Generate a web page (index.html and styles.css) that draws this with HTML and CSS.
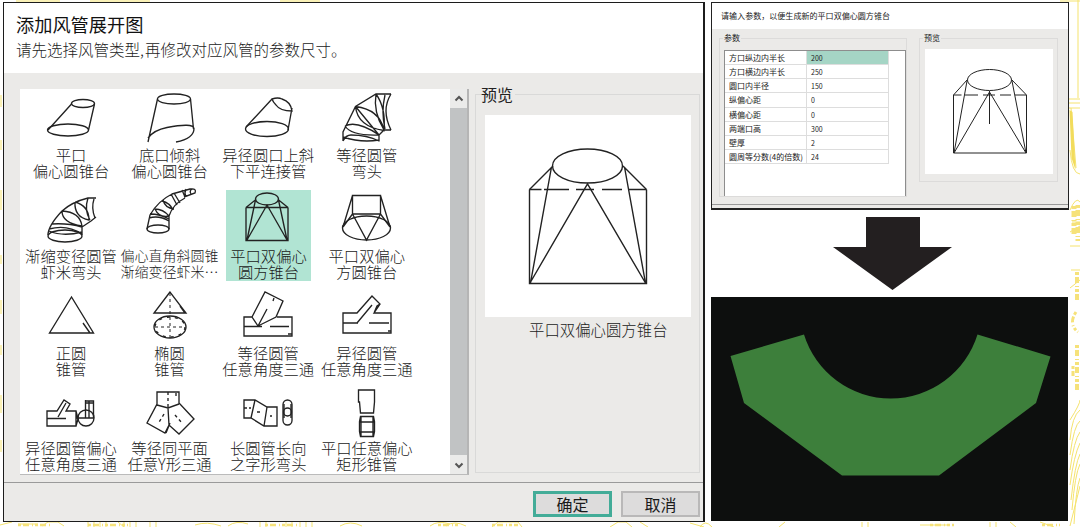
FILE: index.html
```html
<!DOCTYPE html>
<html lang="zh-CN">
<head>
<meta charset="utf-8">
<title>添加风管展开图</title>
<link rel="stylesheet" href="styles.css">
</head>
<body>
<svg class="backdrop" viewBox="0 0 1080 527" aria-hidden="true">
  <g fill="none" stroke="#f5e36e" stroke-width="1">
    <path d="M16 1h44M90 1h60M280 1h40M1060 1h20"/>
    <path d="M1 95v12M1 140v10M1 190v20M1 255v9M1 300v14M1 345v10M1 395v18M1 440v12"/>
    <path d="M1078 0v98M1069 99h11M1069 103h11M1069 108h11M1071 108l5 60M1070 150q2 24 10 24M1070 210q6-14 10-8M1072 222h8M1070 232l10-6M1070 246h10M1071 270h9M1070 288l10-8"/>
    <path d="M1070 420q10-16 10-20M1070 440q2-24 10-30M1070 455q4-30 10-34M1070 470q4-30 10-38M1070 485q4-30 10-42M1071 500q4-36 9-46M1072 510q3-36 8-46M1074 524q2-36 6-46M1070 526l10-40"/>
    <path d="M0 525l12-3M18 524h20M42 526l6-4h10l6 4M88 522v5M94 522v5M100 522v5M106 522v5M118 522l6 5M124 522v5M130 522v5M136 522v5M150 522v5M156 522v5M195 525q12-4 26 1M228 526q8-6 20-2M260 522v5M266 522v5M286 522v5M292 522v5M300 522v5M306 522v5M312 522v5M340 526q10-6 22 0M430 526q8-6 20-2M446 526q8-6 20 0M492 527l6-5h20l4 5M610 527l8-5h8l6 5M640 522l8 5M690 523l14 4M700 527q5-8 12 0M785 522l-6 5M862 522v5M868 522v5M920 525h30M990 522v5M996 522v5M1010 522l6 5M1040 522l14 5"/>
  </g>
  <path d="M1069.500 110l3 2 3 58-4-12z" fill="#f2dc5c"/>
  <g fill="none" stroke="#f6e27a" stroke-width="5" stroke-dasharray="3 2 6 3 1 2">
    <path d="M1074 206v30M1078 205v36"/>
    <path d="M1077 272v28M1077 345v48" stroke-width="4"/>
    <path d="M1076 312q-8 12 2 20M1073 366v10" stroke-width="3"/>
    <path d="M18 525h34M88 525h40M265 525h32M438 525h22M492 525h26M930 525h24M1042 525h18" stroke-width="2.500"/>
  </g>
</svg>

<main class="stage">
  <section class="dialog">
    <header class="dialog-head">
      <h1 class="dialog-title">添加风管展开图</h1>
      <p class="dialog-hint">请先选择风管类型<span class="comma">,</span>再修改对应风管的参数尺寸。</p>
    </header>
    <div class="dialog-body">
      <div class="list">
        <div class="grid">
          <div class="item">
            <svg class="icon" viewBox="0 0 60 54"><ellipse cx="42" cy="11.500" rx="11.500" ry="4"/><path d="M30.500 12L7 38M53.500 12l-6 26"/><ellipse cx="27" cy="38" rx="20.500" ry="6"/></svg>
            <span>平口<br>偏心圆锥台</span>
          </div>
          <div class="item">
            <svg class="icon" viewBox="0 0 60 54"><ellipse cx="34" cy="7" rx="16.500" ry="5"/><path d="M17.500 7L8 50M50.500 7l3 30M8 46q6-8 19-10.500 26-5 27 1 0 10-18 13.500"/></svg>
            <span>底口倾斜<br>偏心圆锥台</span>
          </div>
          <div class="item">
            <svg class="icon" viewBox="0 0 60 54"><path d="M34 7L8 35M54 16l-4 22M34 7q6-2 10 0 9 3 10 12-12 0-16-6-3-3-4-6z"/><ellipse cx="29" cy="37" rx="21.500" ry="7.500"/></svg>
            <span>异径圆口上斜<br>下平连接管</span>
          </div>
          <div class="item">
            <svg class="icon" viewBox="0 0 60 54"><path d="M54 2H39L18.500 14.500 6 40v9M54 38h-7l-5 5v6.500M39 2q-3 18 8 36 2-22-8-36M48 3q-4 17 0 34M54 2q-5 8-5 17t5 19M18.500 14.500q24 3 28.500 23.500M18.500 14.500q2 20 28.500 24M18.500 14.500L42 43M8 34q12-6 34 9M8 34q6 10 34 9M6 49q3-6 8-6 16 0 28 6M6 45q18 6 36 3"/></svg>
            <span>等径圆管<br>弯头</span>
          </div>

          <div class="item">
            <svg class="icon" viewBox="0 0 60 54"><g transform="translate(0 2)"><ellipse cx="24" cy="43" rx="17" ry="6"/><path d="M7 42q0-9 14-24 10-9 26-13h8M41 42v-8l9-6 5-4M8 36q18-5 33 5M8 38q14 6 33 1M11 31q16-1 30 3M21 18q0 12 20 15-2-14-20-15M34 9q-1 15 14 18 0-14-14-18M47 5q-4 12 2 22M53 6q-3 9 1 19"/></g></svg>
            <span>渐缩变径圆管<br>虾米弯头</span>
          </div>
          <div class="item">
            <svg class="icon" viewBox="0 0 60 54"><ellipse cx="18" cy="38" rx="11" ry="4"/><path d="M7 38l3-14q8-14 22-21l18-5q7-1 5 4l-11 4M29 38V25q4-12 16-18M9 27q10-3 20 3M10 23q10 0 19 5M15 18q8 0 14 7M15 18q4 9 14 7M22 10q8 2 11 9M23 9q2 8 11 9M31 3l6 11M34 2l6 10M42-1l3 7M46-2q-2 4 0 8M52-2q-3 2-1 5"/></svg>
            <span class="tight">偏心直角斜圆锥<br>渐缩变径虾米…</span>
          </div>
          <div class="item selected">
            <svg class="icon" viewBox="0 0 60 54"><ellipse cx="29" cy="8" rx="11.500" ry="6"/><path d="M8 16.500v33h42v-33M8 16.500l10-8M50 16.500l-10-8M17.500 9L9 49M40.500 9L49 49M9 49l20-35 20 35M8 16.500h42"/></svg>
            <span>平口双偏心<br>圆方锥台</span>
          </div>
          <div class="item">
            <svg class="icon" viewBox="0 0 60 54"><path d="M15.500 4.500h28v18.500h-28zM15.500 4.500L6 36M43.500 4.500L53 36M15.500 23l14 26 14-26M15.500 23L6 36M43.500 23L53 36"/><ellipse cx="29.500" cy="37" rx="24" ry="12"/></svg>
            <span>平口双偏心<br>方圆锥台</span>
          </div>

          <div class="item row3">
            <svg class="icon" viewBox="0 0 60 54"><path d="M30.500 5L8.500 41h44zM42 31l7 10"/></svg>
            <span>正圆<br>锥管</span>
          </div>
          <div class="item row3">
            <svg class="icon" viewBox="0 0 60 54"><path d="M30 0L14 21h32zM40 14l5 7"/><ellipse cx="30" cy="35" rx="16" ry="11"/><ellipse cx="30" cy="35" rx="15" ry="10" stroke-dasharray="3 5"/><path d="M30 1v45M15 35h30" stroke-dasharray="3 3" stroke-width="1"/></svg>
            <span>椭圆<br>锥管</span>
          </div>
          <div class="item row3">
            <svg class="icon" viewBox="0 0 60 54"><path d="M14 25H6v19h48V25H39M14 25L27 0l18 9-7 16-18 9zM20 34l9-17M6 34.500h18M32 34.500h19M50 42h4M35 9l1-3"/></svg>
            <span>等径圆管<br>任意角度三通</span>
          </div>
          <div class="item row3">
            <svg class="icon" viewBox="0 0 60 54"><path d="M20 21H6v20h48V21H37l6-9-8-8zM20 31l15-18M6 31h15M32 31h20M43 12l-3 2-3 7M51 39h3"/></svg>
            <span>异径圆管<br>任意角度三通</span>
          </div>

          <div class="item row4 low">
            <svg class="icon" viewBox="0 0 60 54"><path d="M16 19H6v15h29V19H25l4-7-6-4zM17 25l8-14M6 26.500h19M35 19l2 8-2 7M44.500 8v18M44.500 9h8v17M48 9v17M35 26h18M45 11h7"/><circle cx="45" cy="26" r="8"/></svg>
            <span>异径圆管偏心<br>任意角度三通</span>
          </div>
          <div class="item row4 low">
            <svg class="icon" viewBox="0 0 60 54"><path d="M17 0h22v11l15 16-15 15-10-9-4 8-18-10 10-19zM17 13l11 3 11-4M28 16l1 17M26 41l4-10M36 1v3"/><path d="M28 0v16M24 22l-6 10M35 23l7 8" stroke-dasharray="3 3"/></svg>
            <span>等径同平面<br>任意Y形三通</span>
          </div>
          <div class="item row4">
            <svg class="icon" viewBox="0 0 60 54"><path d="M6 12h11l12 7h10v19H26l-13-8H6zM17 12l-4 18M29 19l-3 19M6 20h3M11 20h2M19 24h3M32 28h2"/><rect x="45" y="12" width="9" height="25" rx="4.500"/><circle cx="49.500" cy="24" r="4"/><path d="M46 16v14M53 16v14"/></svg>
            <span>长圆管长向<br>之字形弯头</span>
          </div>
          <div class="item row4">
            <svg class="icon" viewBox="0 0 60 54"><path d="M21.500 2h16v12l-1 11h-13l-1-11h-1zM23.500 28.500h13l1 5v10l-1 5h-13l-1-5v-10zM22.500 34h15M22.500 44h15M24 29v19M36 29v19"/></svg>
            <span>平口任意偏心<br>矩形锥管</span>
          </div>
        </div>
        <div class="scrollbar">
          <svg class="scroll-btn" viewBox="0 0 17 19"><path d="M5.500 11.500l3.500-3.500 3.500 3.500"/></svg>
          <svg class="scroll-btn" viewBox="0 0 17 19"><path d="M5.500 8.500l3.500 3.500 3.500-3.500"/></svg>
        </div>
      </div>
      <fieldset class="preview">
        <legend>预览</legend>
        <div class="canvas">
          <svg viewBox="0 0 206 202"><ellipse cx="102.500" cy="51" rx="35" ry="17"/><path d="M44.500 74.500v94h117v-94M44.500 74.500L68 51M161.500 74.500L138 51M66.500 52l-21 116M139.500 52l21 116M45 168l57.500-99 58 99"/><path d="M44.500 74.500h12M59 74.500h25M91 74.500h18M117 74.500h20M144 74.500h17"/></svg>
        </div>
        <p class="caption">平口双偏心圆方锥台</p>
      </fieldset>
    </div>
    <footer class="dialog-foot">
      <button class="btn primary">确定</button>
      <button class="btn">取消</button>
    </footer>
  </section>

  <div class="side">
    <section class="params">
      <p class="params-title">请输入参数，以便生成新的平口双偏心圆方锥台</p>
      <div class="params-body">
        <fieldset class="box form">
          <legend>参数</legend>
          <div class="sheet">
            <dl class="rows">
              <dt>方口纵边内半长</dt><dd class="active">200</dd>
              <dt>方口横边内半长</dt><dd>250</dd>
              <dt>圆口内半径</dt><dd>150</dd>
              <dt>纵偏心距</dt><dd>0</dd>
              <dt>横偏心距</dt><dd>0</dd>
              <dt>两端口高</dt><dd>300</dd>
              <dt>壁厚</dt><dd>2</dd>
              <dt>圆周等分数(4的倍数)</dt><dd>24</dd>
            </dl>
          </div>
        </fieldset>
        <fieldset class="box view">
          <legend>预览</legend>
          <div class="mini">
            <svg viewBox="0 0 128 125"><ellipse cx="64.500" cy="31" rx="22" ry="10.500"/><path d="M28.500 46v58h73V46M28.500 46L42 31M101.500 46L87 31M42 32l-13 72M87 32l14 72M29 104l35.500-61 36.500 61M64.500 42v33"/><path d="M28.500 46h8M40 46h13M58 46h12M75 46h11M90 46h11"/></svg>
          </div>
        </fieldset>
      </div>
    </section>
    <svg class="arrow" viewBox="0 0 119 73"><path d="M33 0h54v30h32L59.500 73 0 30h33z"/></svg>
    <svg class="pattern" viewBox="0 0 357 224"><path d="M19.500 59L93 37.500A90.800 90.800 0 0 0 266.500 37.500L339.500 59.500 325 106 228 178.500H131L33 106z"/></svg>
  </div>
</main>
</body>
</html>
```
FILE: styles.css
```css
* { box-sizing: border-box; margin: 0; padding: 0; }

body {
  width: 1080px;
  height: 527px;
  overflow: hidden;
  background: #fff;
  color: #222;
  font-family: "Noto Sans CJK SC", sans-serif;
}

.backdrop { position: absolute; inset: 0; width: 1080px; height: 527px; z-index: -1; }

.stage { display: flex; gap: 6px; padding: 2px 0 0 3px; }

.dialog {
  width: 702px;
  height: 520px;
  display: flex;
  flex-direction: column;
  background: #ebeae8;
  border: 1px solid #1c1c1c;
  border-right-width: 2px;
}

.dialog-head { height: 70px; padding: 10px 0 0 12px; background: #fff; }
.dialog-title { font-size: 18.200px; line-height: 22px; font-weight: 400; color: #111; }
.dialog-hint { font-size: 15.500px; line-height: 24px; margin-top: 2px; font-weight: 300; white-space: nowrap; color: #222; }
.comma { display: inline-block; width: 5px; }

.dialog-body { display: flex; gap: 7px; height: 410px; padding: 16px 0 0 16px; border-bottom: 1px solid #9a9a9a; }

.list {
  flex: none;
  display: flex;
  width: 449px;
  height: 386px;
  background: #fff;
  border-right: 2px solid #b5b5b5;
  border-bottom: 1px solid #bbb;
}
.grid {
  flex: 1;
  display: grid;
  grid-template-columns: repeat(4, 98.600px);
  grid-template-rows: 101px 97px 95px 92px;
  padding-left: 2px;
}
.item { width: 98px; display: flex; flex-direction: column; align-items: center; text-align: center; }
.item span { font-size: 15.300px; line-height: 16px; font-weight: 300; white-space: nowrap; color: #1a1a1a; }
.item .tight { font-size: 14px; }
.selected { width: 85px; height: 91px; justify-self: center; background: #b1e4d3; }
.icon { width: 60px; height: 54px; flex: none; margin: 3px 0 0; overflow: visible; fill: none; stroke: #222; stroke-width: 1.350; }
.item:nth-child(n+5):nth-child(-n+8) .icon { margin: 1px 0 2px; }
.row3 .icon { margin: 5px 0 -2px; }
.row4 .icon { margin: 6px 0 -3px; }
.row4.low .icon { margin: 10px 0 -7px; }

.scrollbar { width: 17px; display: flex; flex-direction: column; justify-content: space-between; background: #c1c3c4; }
.scroll-btn { width: 17px; height: 19px; background: #ebebea; fill: none; stroke: #555; stroke-width: 2; }

.preview { flex: none; width: 225px; height: 391px; margin: -7px 0 0 -1px; border: 1px solid #d9d9d8; padding: 9px 0 0 9px; }
.preview legend { margin-left: -4px; font-size: 16px; line-height: 24px; padding: 0 2px 0 0; }
.canvas { width: 206px; height: 202px; background: #fff; }
.canvas svg, .mini svg { display: block; width: 100%; height: 100%; fill: none; stroke: #222; stroke-width: 1.400; }
.caption { padding-left: 44px; white-space: nowrap; font-size: 15.400px; line-height: 24px; font-weight: 300; }

.dialog-foot { display: flex; justify-content: flex-end; gap: 9px; padding: 8px 3px 0 0; }
.btn { width: 79px; height: 26px; border: 2px solid #b9b8b8; background: #dddcdc; font: 400 16px/20px "Noto Sans CJK SC", sans-serif; color: #1a1a1a; }
.primary { border: 3px solid #43ac98; line-height: 18px; }

.side { width: 358px; display: flex; flex-direction: column; align-items: flex-start; }

.params { width: 358px; height: 208px; background: #ebeae8; border: 1px solid #222; border-bottom-width: 2px; }
.params-title { height: 26px; padding: 0 0 0 9px; background: #fff; font-size: 8.050px; line-height: 25px; white-space: nowrap; }
.params-body { display: flex; gap: 12px; height: 176px; padding: 3px 0 0 7px; border-bottom: 1px solid #999; }
.box { border: 1px solid #dcdbda; }
.box legend { font-size: 8px; line-height: 12px; margin-left: -1px; padding: 0 1px; }
.form { width: 188px; height: 165px; padding: 6px 0 0 4px; }
.sheet { width: 182px; height: 146px; background: #fff; border: 1px solid #8d8d8d; border-bottom: 0; }
.rows { display: grid; grid-template-columns: 82px 82px; grid-auto-rows: 14.150px; font-size: 8px; line-height: 14px; white-space: nowrap; }
.rows dt, .rows dd { border: solid #ddd; border-width: 0 1px 1px 0; padding-left: 4px; }
.rows dd { font-size: 7px; }
.rows .active { background: #a5d5c5; }
.view { width: 139px; height: 150px; padding: 5px 0 0 5px; }
.view legend { margin-left: -2px; }
.mini { width: 128px; height: 125px; background: #fff; }
.mini svg { stroke-width: 1; }

.arrow { width: 119px; height: 73px; margin: 7px 0 7px 122px; fill: #231f20; }
.pattern { width: 357px; height: 224px; background: #0d0f0e; fill: #3d7f3b; }
```
